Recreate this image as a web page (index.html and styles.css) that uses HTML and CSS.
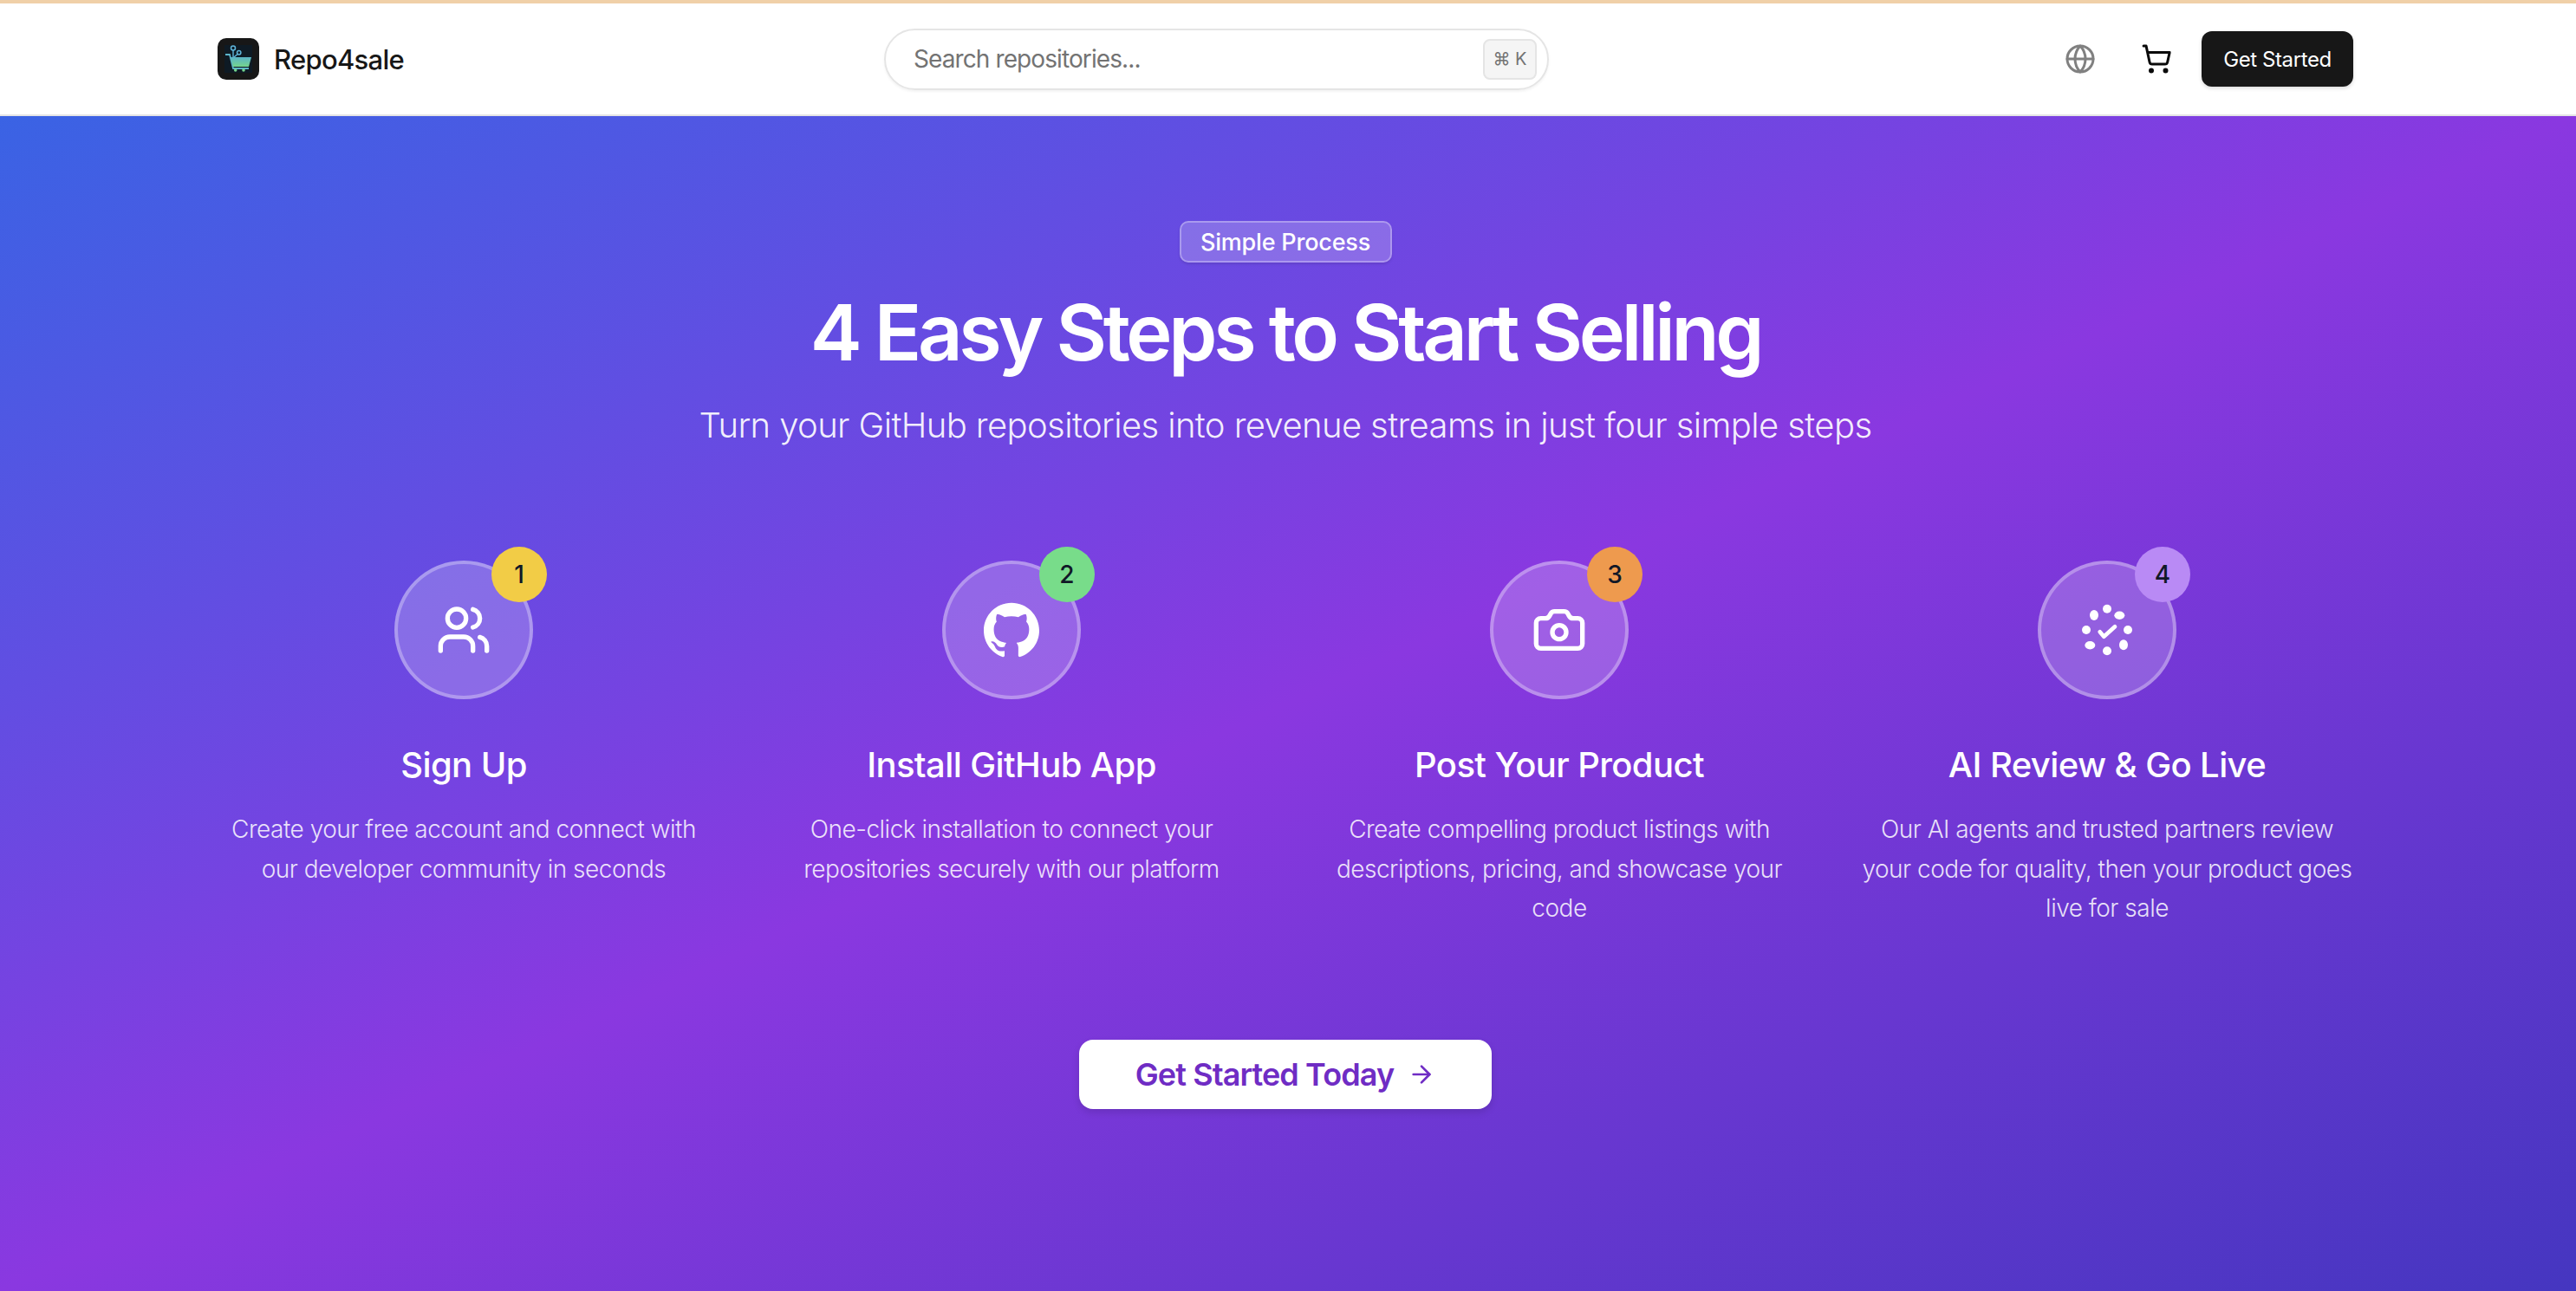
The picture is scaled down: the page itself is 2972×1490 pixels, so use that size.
FILE: index.html
```html
<!DOCTYPE html>
<html lang="en">
<head>
    <meta charset="utf-8">
    <title>Repo4sale</title>
    <link rel="stylesheet" href="styles.css">
</head>

<body>
    <header class="topbar">
        <a class="brand" href="#">
            <span class="brand-mark">
                <svg viewBox="0 0 48 48" width="48" height="48">
                    <defs>
                        <linearGradient id="cart-fill" x1="0" y1="0" x2="0" y2="1">
                            <stop offset="0" stop-color="#5cb4c8"/>
                            <stop offset="1" stop-color="#74d48c"/>
                        </linearGradient>
                    </defs>
                    <rect x="8" y="8" width="32" height="32" fill="#0e1a24"/>
                    <path d="M9 19h5l4 16h18" fill="none" stroke="#5cb4c8" stroke-width="1.800"/>
                    <path d="M18 14v8M23 18.500l-4 3.500" fill="none" stroke="#5fb4d8" stroke-width="1.400"/>
                    <circle cx="18" cy="11.500" r="2.500" fill="none" stroke="#5fb4d8" stroke-width="1.500"/>
                    <circle cx="24.700" cy="16.700" r="2.200" fill="none" stroke="#5fb4d8" stroke-width="1.500"/>
                    <path d="M15 22h24l-3 11H18z" fill="url(#cart-fill)"/>
                    <circle cx="20.700" cy="37" r="1.800" fill="#74d48c"/>
                    <circle cx="30" cy="37" r="1.800" fill="#74d48c"/>
                </svg>
            </span>
            <span class="brand-name">Repo4sale</span>
        </a>
        <div class="search">
            <span class="search-hint">Search repositories...</span>
            <kbd class="search-key">⌘ K</kbd>
        </div>
        <nav class="actions">
            <button class="icon-btn icon-btn-muted" aria-label="Language">
                <svg viewBox="0 0 24 24" width="36" height="36" class="line-icon">
                    <circle cx="12" cy="12" r="10"/>
                    <path d="M12 2a14.5 14.5 0 0 0 0 20 14.500 14.500 0 0 0 0-20"/>
                    <path d="M2 12h20"/>
                </svg>
            </button>
            <button class="icon-btn" aria-label="Cart">
                <svg viewBox="0 0 24 24" width="36" height="36" class="line-icon">
                    <circle cx="8" cy="21" r="1"/>
                    <circle cx="19" cy="21" r="1"/>
                    <path d="M2.050 2.050h2l2.660 12.420a2 2 0 0 0 2 1.580h9.780a2 2 0 0 0 1.950-1.570l1.650-7.430H5.120"/>
                </svg>
            </button>
            <a class="start-btn" href="#">Get Started</a>
        </nav>
    </header>

    <main class="hero">
        <span class="pill">Simple Process</span>
        <h1>4 Easy Steps to Start Selling</h1>
        <p class="lead">Turn your GitHub repositories into revenue streams in just four simple steps</p>

        <div class="steps">
            <article class="step">
                <div class="step-icon">
                    <svg viewBox="0 0 24 24" width="64" height="64" class="line-icon">
                        <path d="M16 21v-2a4 4 0 0 0-4-4H6a4 4 0 0 0-4 4v2"/>
                        <circle cx="9" cy="7" r="4"/>
                        <path d="M16 3.128a4 4 0 0 1 0 7.744"/>
                        <path d="M22 21v-2a4 4 0 0 0-3-3.870"/>
                    </svg>
                    <span class="step-num num-yellow">1</span>
                </div>
                <h3>Sign Up</h3>
                <p>Create your free account and connect with our developer community in seconds</p>
            </article>
            <article class="step">
                <div class="step-icon">
                    <svg viewBox="0 0 24 24" width="64" height="64" class="solid-icon">
                        <path d="M12 .297c-6.630 0-12 5.373-12 12 0 5.303 3.438 9.800 8.205 11.385.600.113.820-.258.820-.577 0-.285-.010-1.040-.015-2.040-3.338.724-4.042-1.610-4.042-1.610C4.422 18.070 3.633 17.700 3.633 17.700c-1.087-.744.084-.729.084-.729 1.205.084 1.838 1.236 1.838 1.236 1.070 1.835 2.809 1.305 3.495.998.108-.776.417-1.305.760-1.605-2.665-.300-5.466-1.332-5.466-5.930 0-1.310.465-2.380 1.235-3.220-.135-.303-.540-1.523.105-3.176 0 0 1.005-.322 3.300 1.230.960-.267 1.980-.399 3-.405 1.020.006 2.040.138 3 .405 2.280-1.552 3.285-1.230 3.285-1.230.645 1.653.240 2.873.120 3.176.765.840 1.230 1.910 1.230 3.220 0 4.610-2.805 5.625-5.475 5.920.420.360.810 1.096.810 2.220 0 1.606-.015 2.896-.015 3.286 0 .315.210.690.825.570C20.565 22.092 24 17.592 24 12.297c0-6.627-5.373-12-12-12"/>
                    </svg>
                    <span class="step-num num-green">2</span>
                </div>
                <h3>Install GitHub App</h3>
                <p>One-click installation to connect your repositories securely with our platform</p>
            </article>
            <article class="step">
                <div class="step-icon">
                    <svg viewBox="0 0 24 24" width="64" height="64" class="line-icon">
                        <path d="M13.997 4a2 2 0 0 1 1.760 1.050l.486.900A2 2 0 0 0 18.003 7H20a2 2 0 0 1 2 2v9a2 2 0 0 1-2 2H4a2 2 0 0 1-2-2V9a2 2 0 0 1 2-2h1.997a2 2 0 0 0 1.759-1.048l.489-.904A2 2 0 0 1 10.004 4z"/>
                        <circle cx="12" cy="13" r="3"/>
                    </svg>
                    <span class="step-num num-orange">3</span>
                </div>
                <h3>Post Your Product</h3>
                <p>Create compelling product listings with descriptions, pricing, and showcase your code</p>
            </article>
            <article class="step">
                <div class="step-icon">
                    <svg viewBox="0 0 64 64" width="64" height="64" class="solid-icon">
                        <circle cx="32" cy="7.700" r="5"/>
                        <circle cx="32" cy="56.300" r="5"/>
                        <circle cx="8" cy="32" r="5"/>
                        <circle cx="56" cy="32" r="5"/>
                        <ellipse cx="17" cy="15" rx="5" ry="6"/>
                        <ellipse cx="46.300" cy="15.300" rx="6" ry="4.700"/>
                        <ellipse cx="12.300" cy="49.700" rx="6" ry="4.700"/>
                        <ellipse cx="51" cy="49.300" rx="5" ry="6"/>
                        <path d="M23.700 34.300l4.600 5.400L41 28.300" fill="none" stroke="#fff" stroke-width="4.700" stroke-linecap="round" stroke-linejoin="round"/>
                    </svg>
                    <span class="step-num num-violet">4</span>
                </div>
                <h3>AI Review &amp; Go Live</h3>
                <p>Our AI agents and trusted partners review your code for quality, then your product goes live for sale</p>
            </article>
        </div>

        <a class="cta" href="#">
            Get Started Today
            <svg viewBox="0 0 24 24" width="32" height="32" class="line-icon">
                <path d="M5 12h14"/>
                <path d="m12 5 7 7-7 7"/>
            </svg>
        </a>
    </main>
</body>

</html>
```

FILE: styles.css
```css
* {
    box-sizing: border-box;
}

html,
body {
    margin: 0;
    padding: 0;
    height: 100%;
}

body {
    display: flex;
    flex-direction: column;
    overflow: hidden;
    font-family: Inter, "Noto Sans", sans-serif;
    border-top: 4px solid #f0d0a8;
}

a {
    text-decoration: none;
}

.line-icon {
    fill: none;
    stroke: currentColor;
    stroke-width: 2;
    stroke-linecap: round;
    stroke-linejoin: round;
}

.solid-icon {
    fill: #fff;
}

/* top bar */

.topbar {
    display: flex;
    align-items: center;
    flex: 0 0 130px;
    padding: 0 257px 0 251px;
    background-color: #fff;
    border-bottom: 2px solid #e5e5e5;
}

.brand {
    display: flex;
    align-items: center;
    gap: 17px;
    color: #171717;
    width: 769px;
}

.brand-mark {
    display: flex;
    width: 48px;
    height: 48px;
    overflow: hidden;
    border-radius: 10px;
    background-color: #171717;
}

.brand-name {
    font-size: 31px;
    font-weight: 500;
    letter-spacing: -0.7px;
}

.search {
    display: flex;
    align-items: center;
    justify-content: space-between;
    width: 767px;
    height: 71px;
    padding: 0 12px 0 32px;
    border: 2px solid #e5e5e5;
    border-radius: 36px;
    box-shadow: 0 2px 3px rgba(0, 0, 0, 0.05);
}

.search-hint {
    font-size: 28px;
    color: #737373;
    letter-spacing: -0.9px;
}

.search-key {
    display: flex;
    align-items: center;
    justify-content: center;
    width: 62px;
    height: 47px;
    border: 2px solid #e5e5e5;
    border-radius: 8px;
    background-color: #f5f5f5;
    font-family: Inter, sans-serif;
    font-size: 20px;
    color: #737373;
}

.actions {
    display: flex;
    align-items: center;
    gap: 16px;
    margin-left: auto;
}

.icon-btn {
    display: flex;
    align-items: center;
    justify-content: center;
    width: 72px;
    height: 64px;
    padding: 0;
    border: 0;
    background: none;
    color: #0a0a0a;
}

.icon-btn-muted {
    color: #808080;
}

.start-btn {
    display: flex;
    align-items: center;
    justify-content: center;
    width: 175px;
    height: 64px;
    border-radius: 12px;
    background-color: #171717;
    box-shadow: 0 2px 4px rgba(0, 0, 0, 0.15);
    color: #fff;
    font-size: 24px;
    font-weight: 400;
    letter-spacing: -0.4px;
}

/* hero */

.hero {
    display: flex;
    flex-direction: column;
    align-items: center;
    flex: 1;
    padding: 121px 257px 0 251px;
    background: linear-gradient(to bottom right, #3a63e4 0%, #8a38e0 50%, #4536c0 100%);
    color: #fff;
}

.pill {
    display: flex;
    align-items: center;
    justify-content: center;
    width: 245px;
    height: 48px;
    border: 2px solid rgba(255, 255, 255, 0.3);
    border-radius: 10px;
    background-color: rgba(255, 255, 255, 0.2);
    box-shadow: 0 2px 3px rgba(0, 0, 0, 0.1);
    font-size: 27px;
    font-weight: 500;
    letter-spacing: -0.2px;
}

h1 {
    margin: 26px 0 0;
    font-size: 90px;
    line-height: 110px;
    font-weight: 600;
    letter-spacing: -4.300px;
}

.lead {
    margin: 22px 0 0;
    font-size: 40px;
    line-height: 60px;
    font-weight: 300;
    letter-spacing: -0.600px;
    color: rgba(255, 255, 255, 0.92);
}

.steps {
    display: grid;
    grid-template-columns: repeat(4, 1fr);
    gap: 64px;
    align-self: stretch;
    margin-top: 126px;
}

.step {
    display: flex;
    flex-direction: column;
    align-items: center;
    text-align: center;
}

.step-icon {
    position: relative;
    display: flex;
    align-items: center;
    justify-content: center;
    width: 160px;
    height: 160px;
    border: 4px solid rgba(255, 255, 255, 0.3);
    border-radius: 50%;
    background-color: rgba(255, 255, 255, 0.2);
}

.step-num {
    position: absolute;
    top: -20px;
    right: -20px;
    display: flex;
    align-items: center;
    justify-content: center;
    width: 64px;
    height: 64px;
    border-radius: 50%;
    color: #111827;
    font-size: 28px;
    font-weight: 500;
}

.num-yellow {
    background-color: #f2cc46;
}

.num-green {
    background-color: #78dc8a;
}

.num-orange {
    background-color: #ee9a4e;
}

.num-violet {
    background-color: #b98af5;
}

.step h3 {
    margin: 48px 0 0;
    font-size: 40px;
    line-height: 56px;
    font-weight: 500;
    letter-spacing: -0.6px;
}

.step p {
    margin: 24px 0 0;
    font-size: 28px;
    line-height: 45.500px;
    font-weight: 300;
    letter-spacing: -0.500px;
    color: rgba(255, 255, 255, 0.85);
}

.cta {
    display: flex;
    align-items: center;
    justify-content: center;
    gap: 16px;
    width: 476px;
    height: 80px;
    margin-top: 128px;
    border-radius: 16px;
    background-color: #fff;
    box-shadow: 0 4px 8px rgba(0, 0, 0, 0.12);
    color: #6f2cc4;
    font-size: 36px;
    font-weight: 600;
    letter-spacing: -0.9px;
}
```
